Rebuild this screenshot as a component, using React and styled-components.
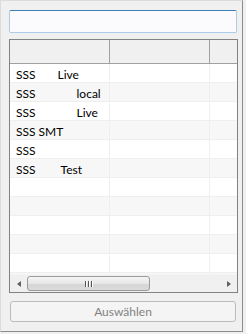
import styled, { createGlobalStyle } from "styled-components";

const GlobalStyle = createGlobalStyle`
  html, body {
    margin: 0;
    padding: 0;
    background: #f0f0f0;
  }
  body {
    font-family: Lato, "Liberation Sans", sans-serif;
    font-size: 12px;
    color: #000;
  }
`;

const Window = styled.div`
  width: 243px;
  height: 332px;
  box-sizing: border-box;
  background: #f0f0f0;
  border: 1px solid;
  border-color: #dcdcdc #8c8c8c #8c8c8c #dcdcdc;
  padding: 9px 0 0 8px;
  display: flex;
  flex-direction: column;
`;

const SearchInput = styled.input`
  width: 228px;
  height: 23px;
  box-sizing: border-box;
  margin: 0;
  border: 1px solid #a9cdeb;
  border-top-color: #3d7eb3;
  border-radius: 2px;
  background: #fbfbfe;
  outline: none;
  font: inherit;
  padding: 0 4px;
`;

const Table = styled.div`
  margin-top: 6px;
  width: 229px;
  height: 254px;
  box-sizing: border-box;
  border: 1px solid #828282;
  background: #fff;
  display: flex;
  flex-direction: column;
  overflow: hidden;
`;

const HeaderRow = styled.div`
  display: grid;
  grid-template-columns: 100px 100px 1fr;
  height: 24px;
  flex: none;
  box-sizing: border-box;
  background: #f0f0f0;
  border-bottom: 1px solid #a0a0a0;
`;

const HeaderCell = styled.div`
  border-right: ${(p) => (p.$last ? "none" : "1px solid #a0a0a0")};
`;

const Body = styled.div`
  flex: 1;
  overflow: hidden;
`;

const Row = styled.div`
  display: grid;
  grid-template-columns: 100px 100px 1fr;
  height: 19px;
  box-sizing: border-box;
  border-bottom: 1px solid #efefef;
  background: ${(p) => (p.$odd ? "#f7f7f7" : "#fff")};
`;

const Cell = styled.div`
  display: flex;
  align-items: center;
  padding: 2px 0 0 6px;
  box-sizing: border-box;
  white-space: nowrap;
  border-right: ${(p) => (p.$last ? "none" : "1px solid #efefef")};
`;

const Suffix = styled.span`
  margin-left: ${(p) => p.$indent}px;
`;

const HScroll = styled.div`
  flex: none;
  height: 17px;
  display: flex;
  align-items: center;
  background: #f0f0f0;
  border-top: 1px solid #f4f4f4;
`;

const Arrow = styled.div`
  width: 17px;
  height: 17px;
  display: flex;
  align-items: center;
  justify-content: center;
  flex: none;
  &::before {
    content: "";
    width: 0;
    height: 0;
    border-top: 3.5px solid transparent;
    border-bottom: 3.5px solid transparent;
    ${(p) =>
      p.$dir === "left"
        ? "border-right: 4px solid #606060;"
        : "border-left: 4px solid #606060;"}
  }
`;

const Track = styled.div`
  flex: 1;
  height: 100%;
  display: flex;
  align-items: center;
`;

const Thumb = styled.div`
  width: 123px;
  height: 15px;
  box-sizing: border-box;
  border: 1px solid #9a9a9a;
  border-radius: 3px;
  background: linear-gradient(#f5f5f5, #e6e6e6 50%, #d6d6d6 51%, #dadada);
  display: flex;
  align-items: center;
  justify-content: center;
  gap: 1px;
`;

const Grip = styled.span`
  width: 1px;
  height: 6px;
  background: #555;
  box-shadow: 1px 0 0 #fff;
  margin-right: 1px;
`;

const Button = styled.button`
  margin: 8px 0 0 1px;
  width: 226px;
  height: 21px;
  box-sizing: border-box;
  border: 1px solid #bcbcbc;
  border-radius: 3px;
  background: #f4f4f4;
  color: #838383;
  font: inherit;
  padding: 0;
`;

const rows = [
  { name: "SSS", suffix: "Live", indent: 22 },
  { name: "SSS", suffix: "local", indent: 41 },
  { name: "SSS", suffix: "Live", indent: 41 },
  { name: "SSS SMT" },
  { name: "SSS" },
  { name: "SSS", suffix: "Test", indent: 25 },
];

const allRows = [...rows, ...Array(6).fill({ name: "" })];

export default function App() {
  return (
    <>
      <GlobalStyle />
      <Window>
        <SearchInput />
        <Table>
          <HeaderRow>
            <HeaderCell />
            <HeaderCell />
            <HeaderCell $last />
          </HeaderRow>
          <Body>
            {allRows.map((r, i) => (
              <Row key={i} $odd={i % 2 === 1}>
                <Cell>
                  {r.name}
                  {r.suffix && <Suffix $indent={r.indent}>{r.suffix}</Suffix>}
                </Cell>
                <Cell />
                <Cell $last />
              </Row>
            ))}
          </Body>
          <HScroll>
            <Arrow $dir="left" />
            <Track>
              <Thumb>
                <Grip />
                <Grip />
                <Grip />
              </Thumb>
            </Track>
            <Arrow $dir="right" />
          </HScroll>
        </Table>
        <Button disabled>Auswählen</Button>
      </Window>
    </>
  );
}
